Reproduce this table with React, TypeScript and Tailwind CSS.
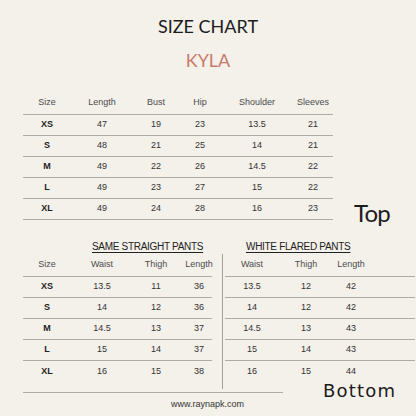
import React from 'react'

// Size chart card: top measurements + two pants tables
const topRows = [
  ['XS', '47', '19', '23', '13.5', '21'],
  ['S', '48', '21', '25', '14', '21'],
  ['M', '49', '22', '26', '14.5', '22'],
  ['L', '49', '23', '27', '15', '22'],
  ['XL', '49', '24', '28', '16', '23'],
]

const straightRows = [
  ['XS', '13.5', '11', '36'],
  ['S', '14', '12', '36'],
  ['M', '14.5', '13', '37'],
  ['L', '15', '14', '37'],
  ['XL', '16', '15', '38'],
]

const flaredRows = [
  ['13.5', '12', '42'],
  ['14', '12', '42'],
  ['14.5', '13', '43'],
  ['15', '14', '43'],
  ['16', '15', '44'],
]

const line = 'border-b border-[#aeaba6]'

export default function App() {
  return (
    <div className="w-[416px] h-[416px] overflow-hidden bg-[#f4f0ea] font-['Liberation_Sans',Arial,sans-serif] text-[#333]">
      {/* Heading */}
      <div className="pt-[17px] text-center font-['Lato',sans-serif]">
        <div className="text-[18px] leading-[18px] text-[#1c1c1c]">SIZE CHART</div>
        <div className="mt-[16px] text-[18px] leading-[18px] text-[#c97b6b]">KYLA</div>
      </div>

      {/* Top table */}
      <div className="mt-[23px] flex items-end">
        <div className="ml-[23px] w-[310px] text-[9px]">
          <div className={`grid h-[23px] grid-cols-[48px_62px_46px_42px_72px_40px] items-center justify-items-center text-[#4d4d4d] ${line}`}>
            <span>Size</span>
            <span>Length</span>
            <span>Bust</span>
            <span>Hip</span>
            <span>Shoulder</span>
            <span>Sleeves</span>
          </div>
          {topRows.map((r) => (
            <div key={r[0]} className={`grid h-[21px] grid-cols-[48px_62px_46px_42px_72px_40px] items-center justify-items-center ${line}`}>
              {r.map((c, i) => (
                <span key={i} className={i === 0 ? 'font-bold text-[#1e1e1e]' : ''}>{c}</span>
              ))}
            </div>
          ))}
        </div>
        <div className="-mb-[5px] ml-[21px] font-['Lato',sans-serif] text-[24px] leading-[24px] tracking-[-0.8px] text-[#1c1c1c]">Top</div>
      </div>

      {/* Pants titles */}
      <div className="mt-[21px] flex text-[10px] leading-[12px] tracking-[-0.3px] text-[#222]">
        <span className="w-[246px] pl-[92px] underline underline-offset-2 decoration-1">SAME STRAIGHT PANTS</span>
        <span className="underline underline-offset-2 decoration-1">WHITE FLARED PANTS</span>
      </div>

      {/* Pants tables */}
      <div className="mt-[1px] flex items-start text-[9px]">
        <div className="ml-[23px] w-[189px]">
          <div className={`grid h-[23px] grid-cols-[48px_62px_46px_40px] items-center justify-items-center text-[#4d4d4d] ${line}`}>
            <span>Size</span>
            <span>Waist</span>
            <span>Thigh</span>
            <span>Length</span>
          </div>
          {straightRows.map((r, ri) => (
            <div key={r[0]} className={`grid h-[21px] grid-cols-[48px_62px_46px_40px] items-center justify-items-center ${ri < 4 ? line : ''}`}>
              {r.map((c, i) => (
                <span key={i} className={i === 0 ? 'font-bold text-[#1e1e1e]' : ''}>{c}</span>
              ))}
            </div>
          ))}
        </div>

        <div className="ml-[10px] h-[135px] w-px bg-[#a3a09b]" />

        <div className="ml-[2px] w-[190px]">
          <div className={`grid h-[23px] grid-cols-[54px_54px_36px] items-center justify-items-center text-[#4d4d4d] ${line}`}>
            <span>Waist</span>
            <span>Thigh</span>
            <span>Length</span>
          </div>
          {flaredRows.map((r, ri) => (
            <div key={ri} className={`grid h-[21px] grid-cols-[54px_54px_36px] items-center justify-items-center ${ri < 4 ? line : ''}`}>
              {r.map((c, i) => (
                <span key={i}>{c}</span>
              ))}
            </div>
          ))}
        </div>
      </div>

      {/* Footer */}
      <div className="mt-[3px] flex items-start">
        <div className="ml-[23px] w-[260px] border-t border-[#aeaba6]">
          <div className="ml-[148px] mt-[5px] text-[9px] leading-[12px] text-[#333]">www.raynapk.com</div>
        </div>
        <div className="-mt-[10px] ml-[40px] font-['DejaVu_Sans',sans-serif] text-[18px] leading-[18px] tracking-[1.2px] text-[#1c1c1c]">Bottom</div>
      </div>
    </div>
  )
}
